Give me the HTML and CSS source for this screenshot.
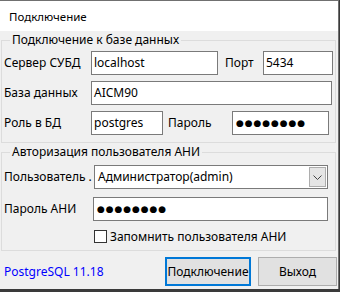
FILE: index.html
```html
<!DOCTYPE html>
<html lang="ru">
<head>
<meta charset="utf-8">
<title>Подключение</title>
<link rel="stylesheet" href="styles.css">
</head>
<body>
<div class="window">
  <div class="titlebar">Подключение</div>
  <div class="client">
    <fieldset class="group g1">
      <legend>Подключение к базе данных</legend>
      <div class="row">
        <span class="lbl w87">Сервер СУБД</span>
        <div class="field w127">localhost</div>
        <span class="lbl port">Порт</span>
        <div class="field w70">5434</div>
      </div>
      <div class="row">
        <span class="lbl w87">База данных</span>
        <div class="field w241">AICM90</div>
      </div>
      <div class="row">
        <span class="lbl w87">Роль в БД</span>
        <div class="field w72">postgres</div>
        <span class="lbl pwd">Пароль</span>
        <div class="field w97 dots">●●●●●●●●</div>
      </div>
    </fieldset>
    <fieldset class="group g2">
      <legend>Авторизация пользователя АНИ</legend>
      <div class="row r-user">
        <span class="lbl w91">Пользователь .</span>
        <div class="combo">
          <span class="combo-text">Администратор(admin)</span>
          <span class="combo-btn"><svg width="9" height="5" viewBox="0 0 9 5"><path d="M0.5 0.5 L4.5 4.5 L8.5 0.5" fill="none" stroke="#444" stroke-width="1"/></svg></span>
        </div>
      </div>
      <div class="row r-pass">
        <span class="lbl w90">Пароль АНИ</span>
        <div class="field w235 dots">●●●●●●●●</div>
      </div>
      <div class="row r-check">
        <span class="check"></span>
        <span class="lbl">Запомнить пользователя АНИ</span>
      </div>
    </fieldset>
    <div class="footer">
      <span class="version">PostgreSQL 11.18</span>
      <div class="buttons">
        <button class="btn primary">Подключение</button>
        <button class="btn exit">Выход</button>
      </div>
    </div>
  </div>
</div>
</body>
</html>
```
FILE: styles.css
```css
* { box-sizing: border-box; }
html, body {
  margin: 0;
  padding: 0;
  width: 340px;
  height: 292px;
  background: #3a3a3a;
  overflow: hidden;
}
body {
  font-family: "Noto Sans", "Liberation Sans", sans-serif;
  font-size: 12px;
  color: #000;
}
.window {
  width: 339px;
  height: 289px;
  background: #f0f0f0;
  border-top: 1px solid #707070;
  border-right: 1px solid #707070;
  display: flex;
  flex-direction: column;
}
.titlebar {
  height: 30px;
  background: #fff;
  padding-left: 9px;
  line-height: 32px;
  font-size: 11.5px;
}
.client {
  flex: 1;
  display: flex;
  flex-direction: column;
  padding-left: 1px;
  padding-right: 2px;
}
.group {
  margin: 0;
  border: 1px solid #dcdcdc;
  min-width: 0;
}
.group legend {
  padding: 0 2px;
  margin-left: 6px;
  line-height: 16px;
  height: 16px;
}
.g1 {
  margin-top: 1px;
  padding: 3px 2px 7px 2px;
  display: flex;
  flex-direction: column;
  gap: 6px;
}
.g2 {
  margin-top: 1px;
  padding: 5px 2px 7px 2px;
  display: flex;
  flex-direction: column;
}
.row {
  display: flex;
  align-items: center;
}
.lbl { white-space: nowrap; line-height: 16px; }
.w87 { width: 87px; flex: none; }
.w90 { width: 89px; flex: none; }
.w91 { width: 90px; flex: none; }
.port { margin-left: 7px; width: 38px; flex: none; }
.pwd { margin-left: 5px; width: 64px; flex: none; }
.field {
  height: 24px;
  border: 1px solid #7a7a7a;
  background: #fff;
  padding: 0 0 0 2px;
  line-height: 22px;
  white-space: nowrap;
  overflow: hidden;
  flex: none;
}
.w127 { width: 127px; }
.w70 { width: 70px; }
.w241 { width: 241px; }
.w72 { width: 72px; }
.w97 { width: 97px; }
.w235 { width: 235px; }
.dots {
  font-family: "DejaVu Sans", sans-serif;
  font-size: 9px;
  letter-spacing: 0.9px;
  padding-left: 3px;
}
.r-pass { margin-top: 8px; }
.r-check { margin-top: 9px; padding-left: 90px; height: 13px; }
.combo {
  width: 234px;
  height: 24px;
  border: 1px solid #7a7a7a;
  background: #fff;
  display: flex;
  align-items: center;
  justify-content: space-between;
  padding: 1px;
  flex: none;
}
.combo-text { padding-left: 2px; line-height: 20px; }
.combo-btn {
  width: 17px;
  height: 20px;
  background: #e5e5e5;
  border: 1px solid #adadad;
  display: flex;
  align-items: center;
  justify-content: center;
}
.check {
  width: 13px;
  height: 13px;
  border: 1px solid #333;
  background: #fff;
  margin-right: 3px;
  flex: none;
}
.footer {
  display: flex;
  justify-content: space-between;
  align-items: center;
  padding: 6px 0 0 3px;
}
.version { color: #0000ff; line-height: 16px; }
.buttons { display: flex; gap: 7px; margin-right: -1px; }
.btn {
  font-family: inherit;
  font-size: 12px;
  height: 29px;
  background: #e1e1e1;
  border: 1px solid #adadad;
  padding: 0;
  color: #000;
}
.primary { width: 86px; border: 2px solid #0078d7; }
.exit { width: 79px; }
```
